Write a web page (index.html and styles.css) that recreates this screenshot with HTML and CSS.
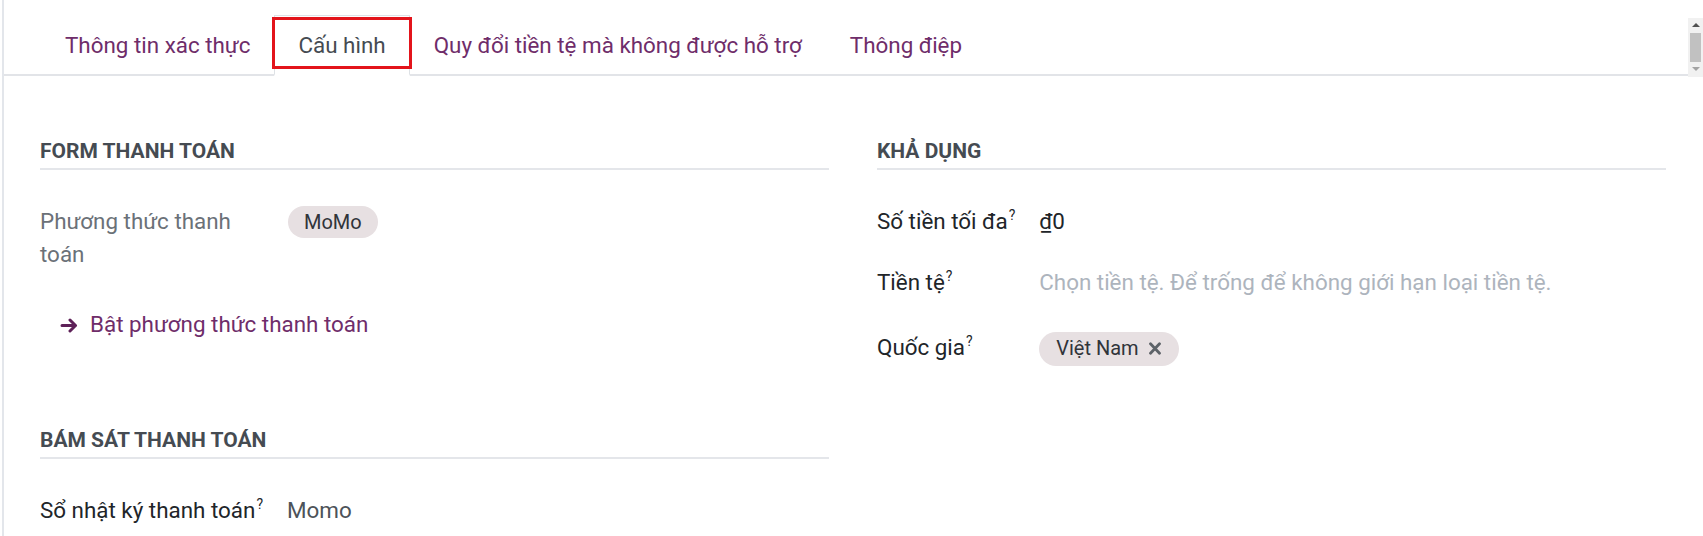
FILE: index.html
```html
<!DOCTYPE html>
<html lang="vi">
<head>
<meta charset="utf-8">
<title>Cấu hình</title>
<link rel="stylesheet" href="styles.css">
</head>
<body>
<div class="window">
  <div class="sheet">
    <div class="tabbar">
      <ul class="tabs">
        <li class="tab">Thông tin xác thực</li>
        <li class="tab active">Cấu hình</li>
        <li class="tab">Quy đổi tiền tệ mà không được hỗ trợ</li>
        <li class="tab">Thông điệp</li>
      </ul>
    </div>
    <div class="content">
      <div class="column">
        <section class="group">
          <h2 class="separator">Form thanh toán</h2>
          <div class="fields">
            <div class="label muted">Phương thức thanh toán</div>
            <div class="value"><span class="tag">MoMo</span></div>
            <div class="link-row">
              <a class="action-link" href="#">
                <svg class="arrow" width="18" height="15" viewBox="0 0 18 15" aria-hidden="true">
                  <path d="M2 7.5H15.5M10 2L15.5 7.5L10 13" fill="none" stroke="currentColor" stroke-width="3" stroke-linecap="round" stroke-linejoin="round"/>
                </svg>
                <span>Bật phương thức thanh toán</span>
              </a>
            </div>
          </div>
        </section>
        <section class="group group-second">
          <h2 class="separator">Bám sát thanh toán</h2>
          <div class="fields">
            <div class="label">Sổ nhật ký thanh toán<sup class="hint">?</sup></div>
            <div class="value soft">Momo</div>
          </div>
        </section>
      </div>
      <div class="column">
        <section class="group">
          <h2 class="separator">Khả dụng</h2>
          <div class="fields spaced">
            <div class="label">Số tiền tối đa<sup class="hint">?</sup></div>
            <div class="value">₫0</div>
            <div class="label">Tiền tệ<sup class="hint">?</sup></div>
            <div class="value placeholder">Chọn tiền tệ. Để trống để không giới hạn loại tiền tệ.</div>
            <div class="label row-tag">Quốc gia<sup class="hint">?</sup></div>
            <div class="value row-tag"><span class="tag tag-lg">Việt Nam<svg class="remove" width="14" height="13" viewBox="0 0 14 13" aria-hidden="true"><path d="M2.5 1.8L11.5 11.2M11.5 1.8L2.5 11.2" stroke="currentColor" stroke-width="2.8" stroke-linecap="round"/></svg></span></div>
          </div>
        </section>
      </div>
    </div>
  </div>
  <div class="scrollbar">
    <div class="sb-up"></div>
    <div class="sb-thumb"></div>
    <div class="sb-down"></div>
  </div>
</div>
</body>
</html>
```
FILE: styles.css
```css
* { box-sizing: border-box; }

html, body {
  margin: 0;
  padding: 0;
  background: #fff;
}

body {
  font-family: Roboto, "Noto Sans", "Liberation Sans", sans-serif;
  font-size: 22.4px;
  line-height: 1.5;
  color: #212529;
  overflow: hidden;
}

.window {
  display: flex;
  align-items: flex-start;
  height: 536px;
}

.sheet {
  flex: 1;
  margin-left: 2px;
  border-left: 2px solid #e3e6eb;
  height: 100%;
}

/* Tabs */
.tabbar {
  padding-top: 15px;
  border-bottom: 2px solid #e2e4e8;
}

.tabs {
  display: flex;
  list-style: none;
  margin: 0 0 0 37px;
  padding: 0;
}

.tab {
  position: relative;
  padding: 12.8px 23px 12px;
  border: 1px solid transparent;
  border-bottom: 0;
  color: #6f2d6a;
  white-space: nowrap;
}

.tab.active {
  color: #454b52;
  background: #fff;
  border-color: #dee2e6;
  border-bottom: 2px solid #fff;
  margin-bottom: -2px;
}

.tab.active::after {
  content: "";
  position: absolute;
  left: -3px;
  right: -3px;
  top: 1px;
  bottom: 5px;
  border: 3px solid #e3141b;
}

/* Content */
.content {
  display: grid;
  grid-template-columns: 1fr 1fr;
  column-gap: 48px;
  padding: 61px 22px 0 36px;
}

.separator {
  margin: 0 0 35px;
  padding-bottom: 1px;
  font-size: 21px;
  line-height: 29.4px;
  font-weight: 700;
  text-transform: uppercase;
  color: #454b52;
  border-bottom: 2px solid #e4e6ea;
}

.group-second {
  margin-top: 84px;
}

.fields {
  display: grid;
  grid-template-columns: fit-content(248px) 1fr;
  align-items: start;
}

.fields.spaced {
  row-gap: 28px;
}

.row-tag {
  padding-top: 3px;
}

.label {
  padding-right: 24px;
  color: #212529;
}

.label.muted {
  color: #6b7178;
}

.value {
  color: #212529;
}

.value.soft {
  color: #4d5359;
}

.value.placeholder {
  color: #adb4bd;
}

.hint {
  font-size: 14px;
  line-height: 1;
  vertical-align: 9px;
  margin-left: 1px;
  color: #23272b;
}

.tag {
  display: inline-flex;
  align-items: center;
  font-size: 20px;
  line-height: 27px;
  padding: 2.5px 16px;
  border-radius: 999px;
  background: #e7e0e2;
  color: #30343a;
  vertical-align: baseline;
}

.tag-lg {
  padding: 3.5px 17px;
}

.remove {
  margin-left: 9px;
  color: #5d6268;
}

.link-row {
  grid-column: 1 / -1;
  margin-top: 35.8px;
  padding-left: 20px;
}

.action-link {
  display: inline-flex;
  align-items: center;
  gap: 12px;
  color: #6f2d6a;
  text-decoration: none;
}

.arrow {
  color: #5e2158;
  margin-top: 1px;
}

/* Scrollbar */
.scrollbar {
  flex: 0 0 15px;
  width: 15px;
  height: 59px;
  margin-top: 18px;
  background: #f1f1f1;
  display: flex;
  flex-direction: column;
  align-items: center;
  padding-top: 5px;
}

.sb-up {
  width: 0;
  height: 0;
  border-left: 4px solid transparent;
  border-right: 4px solid transparent;
  border-bottom: 4px solid #505050;
}

.sb-thumb {
  width: 11px;
  height: 29px;
  margin-top: 6px;
  background: #c1c1c1;
}

.sb-down {
  width: 0;
  height: 0;
  margin-top: 5px;
  border-left: 4px solid transparent;
  border-right: 4px solid transparent;
  border-top: 4px solid #a3a3a3;
}
```
